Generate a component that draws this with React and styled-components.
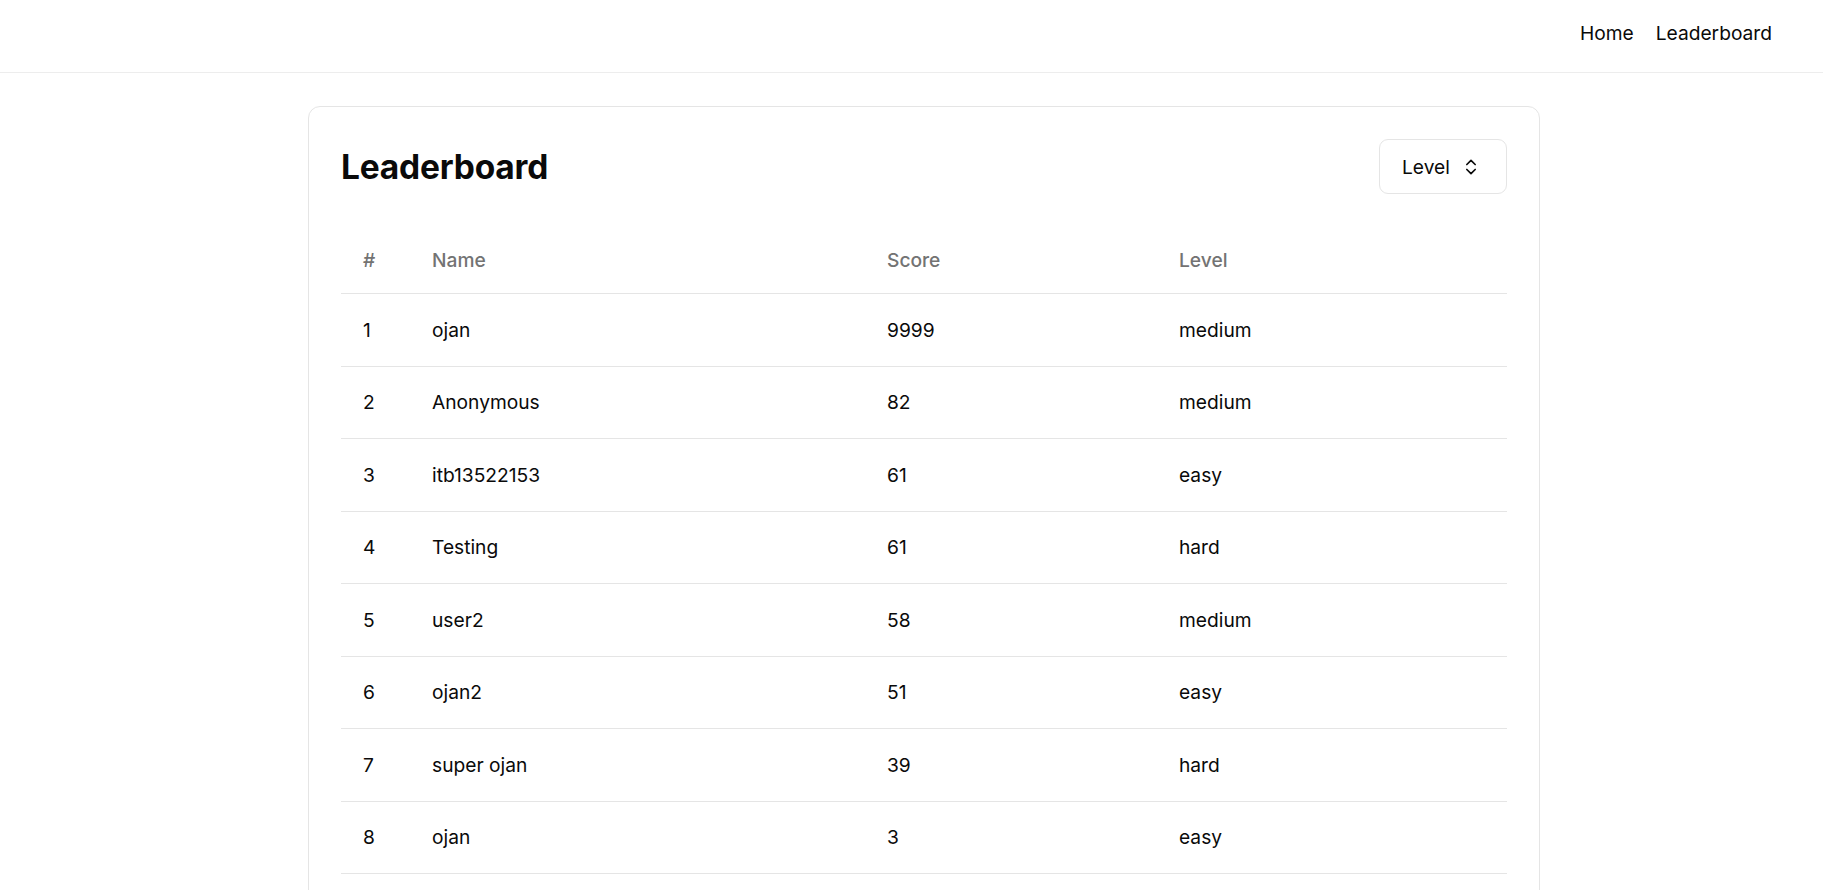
import React from "react";
import styled, { createGlobalStyle } from "styled-components";

const GlobalStyle = createGlobalStyle`
  html, body {
    margin: 0;
    padding: 0;
    background: #ffffff;
    font-family: Inter, "Noto Sans", sans-serif;
    color: #0a0a0a;
  }
  * { box-sizing: border-box; }
`;

const TopBar = styled.header`
  height: 73px;
  border-bottom: 1px solid #ededed;
  display: flex;
  align-items: center;
  justify-content: flex-end;
  padding: 0 51px 6px 0;
`;

const Nav = styled.nav`
  display: flex;
  gap: 22px;
`;

const NavLink = styled.a`
  font-size: 19.2px;
  color: #0a0a0a;
  text-decoration: none;
  cursor: pointer;
`;

const Main = styled.main`
  padding: 33px 0 0 308px;
`;

const Card = styled.section`
  width: 1232px;
  border: 1px solid #e5e5e5;
  border-radius: 12px;
  padding: 32px;
  background: #fff;
`;

const CardHeader = styled.div`
  display: flex;
  align-items: center;
  justify-content: space-between;
  height: 54px;
`;

const Title = styled.h1`
  margin: 0;
  font-size: 33.5px;
  font-weight: 700;
  letter-spacing: -0.2px;
  padding-top: 2px;
`;

const SelectButton = styled.button`
  height: 55px;
  width: 128px;
  margin-top: 1px;
  display: flex;
  align-items: center;
  justify-content: space-between;
  padding: 0 25px 0 22px;
  background: #fff;
  border: 1px solid #e5e5e5;
  border-radius: 9px;
  font-family: inherit;
  font-size: 19.2px;
  color: #0a0a0a;
  cursor: pointer;
`;

const Table = styled.div`
  margin-top: 33px;
  width: 100%;
`;

const Row = styled.div`
  display: grid;
  grid-template-columns: 69px 455px 292px 1fr;
  align-items: center;
  height: ${(p) => (p.$head ? "68px" : "72.5px")};
  border-bottom: 1px solid #e5e5e5;
`;

const Cell = styled.div`
  padding-left: 22px;
  font-size: 19.2px;
  font-weight: ${(p) => (p.$head ? 500 : 400)};
  color: ${(p) => (p.$head ? "#737373" : "#0a0a0a")};
  white-space: nowrap;
`;

const ChevronsUpDown = () => (
  <svg width="20" height="20" viewBox="0 0 24 24" fill="none" stroke="currentColor" strokeWidth="2" strokeLinecap="round" strokeLinejoin="round">
    <path d="m7 15 5 5 5-5" />
    <path d="m7 9 5-5 5 5" />
  </svg>
);

const data = [
  ["ojan", 9999, "medium"],
  ["Anonymous", 82, "medium"],
  ["itb13522153", 61, "easy"],
  ["Testing", 61, "hard"],
  ["user2", 58, "medium"],
  ["ojan2", 51, "easy"],
  ["super ojan", 39, "hard"],
  ["ojan", 3, "easy"],
];

export default function App() {
  return (
    <>
      <GlobalStyle />
      <TopBar>
        <Nav>
          <NavLink>Home</NavLink>
          <NavLink>Leaderboard</NavLink>
        </Nav>
      </TopBar>
      <Main>
        <Card>
          <CardHeader>
            <Title>Leaderboard</Title>
            <SelectButton>
              <span>Level</span>
              <ChevronsUpDown />
            </SelectButton>
          </CardHeader>
          <Table>
            <Row $head>
              <Cell $head>#</Cell>
              <Cell $head>Name</Cell>
              <Cell $head>Score</Cell>
              <Cell $head>Level</Cell>
            </Row>
            {data.map((d, i) => (
              <Row key={i}>
                <Cell>{i + 1}</Cell>
                <Cell>{d[0]}</Cell>
                <Cell>{d[1]}</Cell>
                <Cell>{d[2]}</Cell>
              </Row>
            ))}
          </Table>
        </Card>
      </Main>
    </>
  );
}
